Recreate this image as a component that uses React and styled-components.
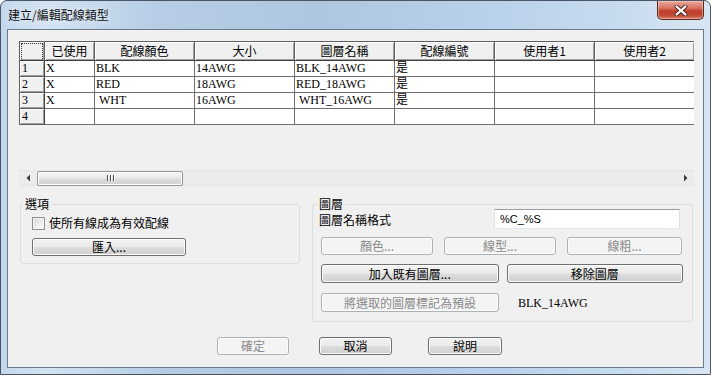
import React from "react";
import styled, { createGlobalStyle } from "styled-components";

const Global = createGlobalStyle`
  html, body { margin: 0; padding: 0; background: #ffffff; }
  body { font-family: "Noto Sans CJK TC", "Noto Sans", sans-serif; }
  * { box-sizing: border-box; }
`;

const UI = `"Noto Sans CJK TC", "Noto Sans", sans-serif`;
const SERIF = `"Liberation Serif", "Noto Sans CJK TC", serif`;

const Window = styled.div`
  width: 711px;
  height: 375px;
  border: 1px solid #4b5563;
  border-radius: 7px 7px 0 0;
  background: linear-gradient(90deg, #c3d7ec 0%, #d3e3f3 6%, #b6cde5 22%, #aec6df 45%, #b9d1ea 70%, #c8dcef 88%, #d9e6f2 100%);
  padding: 0 6px 6px 6px;
  display: flex;
  flex-direction: column;
  overflow: hidden;
`;

const TitleBar = styled.div`
  height: 28px;
  display: flex;
  justify-content: space-between;
  align-items: flex-start;
`;

const Title = styled.div`
  padding: 6px 0 0 1px;
  font: 12px/15px ${UI};
  color: #111;
  text-shadow: 0 0 6px rgba(255, 255, 255, 0.9);
`;

const CloseBtn = styled.div`
  width: 47px;
  height: 19px;
  border: 1px solid #5b2a24;
  border-top: none;
  border-radius: 0 0 5px 5px;
  background: linear-gradient(#e8a99d 0%, #d7715f 40%, #c0402d 55%, #c24a35 80%, #d8806a 100%);
  display: flex;
  align-items: center;
  justify-content: center;
  box-shadow: inset 0 0 0 1px rgba(255, 220, 210, 0.45);
`;

const Client = styled.div`
  flex: 1;
  border: 1px solid #6c7b8b;
  background: #f0f0f0;
  padding: 11px 9px 0 11px;
  display: flex;
  flex-direction: column;
`;

const GridArea = styled.div`
  height: 129px;
`;

const GridClip = styled.div`
  width: 675px;
  overflow: hidden;
  border-left: 1px solid #5f5f5f;
  border-top: 1px solid #5f5f5f;
`;

const Grid = styled.div`
  display: grid;
  grid-template-columns: 25px 50px 100px 100px 100px 100px 100px 100px;
  grid-template-rows: 19px repeat(4, 16px);
  width: 676px;
`;

const HeadCell = styled.div`
  background: #f0f0f0;
  border-right: 1px solid #5f5f5f;
  border-bottom: 1px solid #3f3f3f;
  box-shadow: inset 1px 1px 0 #ffffff, inset -1px -1px 0 #a0a0a0;
  font: 12px/17px ${UI};
  color: #000;
  text-align: center;
  white-space: nowrap;
`;

const Corner = styled(HeadCell)`
  padding: 1px;
  &::after {
    content: "";
    display: block;
    height: 100%;
    border: 1px dotted #333;
  }
`;

const RowHead = styled.div`
  background: #f0f0f0;
  border-right: 1px solid #3f3f3f;
  border-bottom: 1px solid #5f5f5f;
  box-shadow: inset 1px 1px 0 #ffffff, inset -1px -1px 0 #a0a0a0;
  font: 12px/15px ${SERIF};
  padding-left: 2px;
  color: #000;
`;

const Cell = styled.div`
  background: #ffffff;
  border-right: 1px solid #6f6f6f;
  border-bottom: 1px solid #6f6f6f;
  font: 12px/15px ${SERIF};
  padding-left: ${(p) => (p.$indent ? 4 : 1)}px;
  color: #000;
  white-space: nowrap;
  overflow: hidden;
`;

const ScrollTrack = styled.div`
  width: 675px;
  height: 16px;
  display: flex;
  align-items: center;
  background: linear-gradient(#e3e3e3 0%, #ececec 10%, #ececec 90%, #e3e3e3 100%);
`;

const ArrowBox = styled.div`
  width: 18px;
  height: 16px;
  display: flex;
  align-items: center;
  justify-content: center;
`;

const Thumb = styled.div`
  width: 146px;
  height: 15px;
  border: 1px solid #979797;
  border-radius: 2px;
  background: linear-gradient(#f6f6f6 0%, #e9e9e9 45%, #dadada 55%, #d2d2d2 100%);
  box-shadow: inset 0 0 0 1px #fbfbfb;
  display: flex;
  align-items: center;
  justify-content: center;
  gap: 2px;
`;

const GripLine = styled.span`
  width: 1px;
  height: 6px;
  background: #4a4a4a;
  box-shadow: 1px 0 0 #fff;
`;

const Spacer = styled.div`
  flex: 1;
`;

const GroupsRow = styled.div`
  margin-top: 11px;
  display: flex;
  align-items: flex-start;
  gap: 12px;
  padding-left: 1px;
`;

const Group = styled.fieldset`
  margin: 0;
  width: ${(p) => p.$w}px;
  border: 1px solid #d5dfe5;
  border-radius: 3px;
  padding: ${(p) => p.$pad};
  min-width: 0;
`;

const Legend = styled.legend`
  font: 12px/14px ${UI};
  color: #000;
  padding: 0 2px;
  margin-left: ${(p) => p.$ml}px;
`;

const CheckRow = styled.label`
  display: flex;
  align-items: center;
  gap: 4px;
  height: 14px;
  font: 12px/14px ${UI};
  color: #000;
`;

const CheckBox = styled.span`
  width: 13px;
  height: 13px;
  border: 1px solid #8e8f8f;
  background: linear-gradient(135deg, #d8d8d8 0%, #eeeeee 60%, #fafafa 100%);
  box-shadow: inset 0 0 0 1px #f4f4f4;
`;

const Btn = styled.button`
  display: block;
  width: ${(p) => p.$w}px;
  height: ${(p) => p.$h || 18}px;
  margin: 0;
  padding: 0;
  font: 12px/14px ${UI};
  color: ${(p) => (p.disabled ? "#8a8a8a" : "#000")};
  border: 1px solid ${(p) => (p.disabled ? "#adb2b5" : "#707070")};
  border-radius: 3px;
  background: ${(p) =>
    p.disabled
      ? "#f4f4f4"
      : "linear-gradient(#f2f2f2 0%, #ebebeb 48%, #dddddd 52%, #cfcfcf 100%)"};
  box-shadow: inset 0 0 0 1px ${(p) => (p.disabled ? "#fbfbfb" : "#fcfcfc")};
`;

const BtnSlot = styled.div`
  margin-top: ${(p) => p.$mt || 0}px;
`;

const FormatRow = styled.div`
  display: flex;
  align-items: flex-end;
  margin-top: -2px;
`;

const FieldLabel = styled.div`
  width: 175px;
  margin-bottom: 2px;
  font: 12px/14px ${UI};
  color: #000;
`;

const TextBox = styled.div`
  width: 186px;
  height: 20px;
  background: #fff;
  border: 1px solid #abadb3;
  border-top-color: #9a9ca3;
  border-left-color: #e2e3ea;
  border-right-color: #dbdfe6;
  border-bottom-color: #e3e9ef;
  font: 11px/18px "Liberation Sans", sans-serif;
  padding-left: 5px;
  color: #000;
`;

const BtnRow = styled.div`
  display: flex;
  align-items: center;
  gap: ${(p) => p.$gap}px;
  margin-top: ${(p) => p.$mt}px;
  margin-left: 2px;
`;

const LayerName = styled.div`
  margin-left: 11px;
  font: 12px/14px ${SERIF};
  color: #000;
`;

const FooterRow = styled.div`
  display: flex;
  margin-top: 15px;
  padding-left: 198px;
`;

const FooterGap = styled.div`
  width: ${(p) => p.$w}px;
`;

const headers = ["已使用", "配線顏色", "大小", "圖層名稱", "配線編號", "使用者1", "使用者2"];
const rows = [
  ["X", "BLK", "14AWG", "BLK_14AWG", "是", "", ""],
  ["X", "RED", "18AWG", "RED_18AWG", "是", "", ""],
  ["X", "WHT", "16AWG", "WHT_16AWG", "是", "", ""],
  ["", "", "", "", "", "", ""],
];

function CloseIcon() {
  return (
    <svg width="14" height="11" viewBox="0 0 14 11">
      <path d="M2.5 1.5 L11.5 9.5 M11.5 1.5 L2.5 9.5" stroke="#4a2a26" strokeWidth="4" strokeLinecap="round" />
      <path d="M2.5 1.5 L11.5 9.5 M11.5 1.5 L2.5 9.5" stroke="#ffffff" strokeWidth="2.2" strokeLinecap="round" />
    </svg>
  );
}

function Arrow({ dir }) {
  return (
    <svg width="5" height="8" viewBox="0 0 5 8">
      {dir === "left" ? (
        <path d="M4 0.5 L0.5 4 L4 7.5 Z" fill="#404040" />
      ) : (
        <path d="M1 0.5 L4.5 4 L1 7.5 Z" fill="#404040" />
      )}
    </svg>
  );
}

export default function App() {
  return (
    <>
      <Global />
      <Window>
        <TitleBar>
          <Title>建立/編輯配線類型</Title>
          <CloseBtn>
            <CloseIcon />
          </CloseBtn>
        </TitleBar>
        <Client>
          <GridArea>
            <GridClip>
              <Grid>
                <Corner />
                {headers.map((h) => (
                  <HeadCell key={h}>{h}</HeadCell>
                ))}
                {rows.map((r, i) => (
                  <React.Fragment key={i}>
                    <RowHead>{i + 1}</RowHead>
                    {r.map((c, j) => (
                      <Cell key={j} $indent={i === 2 && (j === 1 || j === 3)}>
                        {c}
                      </Cell>
                    ))}
                  </React.Fragment>
                ))}
              </Grid>
            </GridClip>
          </GridArea>
          <ScrollTrack>
            <ArrowBox>
              <Arrow dir="left" />
            </ArrowBox>
            <Thumb>
              <GripLine />
              <GripLine />
              <GripLine />
            </Thumb>
            <Spacer />
            <ArrowBox>
              <Arrow dir="right" />
            </ArrowBox>
          </ScrollTrack>
          <GroupsRow>
            <Group $w={280} $pad="5px 11px 7px 11px">
              <Legend $ml={-9}>選項</Legend>
              <CheckRow>
                <CheckBox />
                使所有線成為有效配線
              </CheckRow>
              <BtnSlot $mt={8}>
                <Btn $w={154}>匯入...</Btn>
              </BtnSlot>
            </Group>
            <Group $w={381} $pad="0 9px 9px 6px">
              <Legend $ml={-2}>圖層</Legend>
              <FormatRow>
                <FieldLabel>圖層名稱格式</FieldLabel>
                <TextBox>%C_%S</TextBox>
              </FormatRow>
              <BtnRow $gap={11} $mt={8}>
                <Btn $w={112} disabled>顏色...</Btn>
                <Btn $w={112} disabled>線型...</Btn>
                <Btn $w={115} disabled>線粗...</Btn>
              </BtnRow>
              <BtnRow $gap={8} $mt={9}>
                <Btn $w={178} $h={19}>加入既有圖層...</Btn>
                <Btn $w={177} $h={19}>移除圖層</Btn>
              </BtnRow>
              <BtnRow $gap={8} $mt={10}>
                <Btn $w={178} $h={19} disabled>將選取的圖層標記為預設</Btn>
                <LayerName>BLK_14AWG</LayerName>
              </BtnRow>
            </Group>
          </GroupsRow>
          <FooterRow>
            <Btn $w={72} disabled>確定</Btn>
            <FooterGap $w={30} />
            <Btn $w={73}>取消</Btn>
            <FooterGap $w={36} />
            <Btn $w={74}>說明</Btn>
          </FooterRow>
        </Client>
      </Window>
    </>
  );
}
